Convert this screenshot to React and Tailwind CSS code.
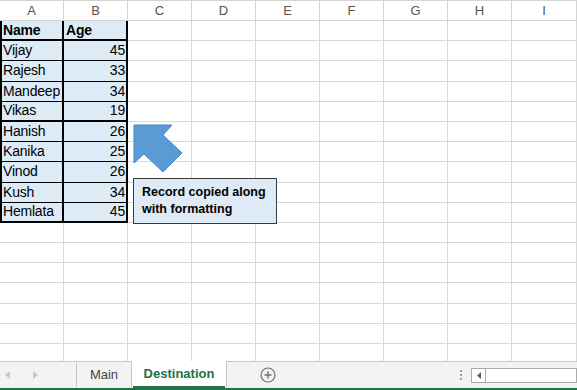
import React from 'react';

const cols = ['A', 'B', 'C', 'D', 'E', 'F', 'G', 'H', 'I'];

const records = [
  ['Name', 'Age'],
  ['Vijay', '45'],
  ['Rajesh', '33'],
  ['Mandeep', '34'],
  ['Vikas', '19'],
  ['Hanish', '26'],
  ['Kanika', '25'],
  ['Vinod', '26'],
  ['Kush', '34'],
  ['Hemlata', '45'],
];

const TOTAL_ROWS = 17;

// rows that get a thick bottom edge: header, Vikas, Hemlata
const thickBottom = [0, 4, 9];

function Cell({ row, col }) {
  const rec = records[row];
  if (rec && col < 2) {
    const thick = thickBottom.includes(row);
    const header = row === 0;
    const isAge = col === 1;
    return (
      <div
        className={
          'flex h-full items-center overflow-hidden whitespace-nowrap bg-[#ddebf7] text-[14px] tracking-[-0.2px] text-black ' +
          (thick ? 'border-b-2 border-b-black ' : 'border-b border-b-black ') +
          (col === 0 ? 'border-l-2 border-l-black border-r-2 border-r-black pl-[1px] ' : 'border-r-2 border-r-black pr-[1px] ') +
          (header ? 'font-bold justify-start ' : isAge ? 'justify-end ' : 'justify-start ') +
          (header && isAge ? 'pl-[2px] ' : '')
        }
      >
        {rec[col]}
      </div>
    );
  }
  return <div className="h-full border-b border-r border-[#d9d9d9] bg-white" />;
}

function SheetGrid() {
  return (
    <div className="relative flex-1 overflow-hidden bg-white">
      <div className="grid grid-cols-[64px_64px_64px_64px_64px_64px_64px_64px_65px] grid-rows-[21px_repeat(17,20.2px)]">
        {cols.map((c) => (
          <div
            key={c}
            className="flex items-center justify-center border-b border-r border-t border-[#d4d4d4] bg-white text-[13px] text-[#555]"
          >
            {c}
          </div>
        ))}
        {Array.from({ length: TOTAL_ROWS }).map((_, r) =>
          cols.map((c, ci) => <Cell key={c + r} row={r} col={ci} />)
        )}
      </div>

      {/* block arrow pointing back at the pasted range */}
      <svg className="absolute left-0 top-0" width="577" height="360">
        <polygon
          points="134,125 172,125 163,135 182,153 163,172 144,154 134,163"
          fill="#5b9bd5"
          stroke="#4a86bf"
          strokeWidth="1"
        />
      </svg>

      {/* callout */}
      <div className="absolute left-[133px] top-[178px] flex h-[46px] w-[144px] flex-col justify-center border border-[#3b3b3b] bg-[#deeaf6] pl-[8px] text-[12.5px] font-bold leading-[17px] text-black">
        <span>Record copied along</span>
        <span>with formatting</span>
      </div>
    </div>
  );
}

function TabBar() {
  return (
    <div className="flex h-[27px] shrink-0 items-stretch border-t border-[#c6c6c6] bg-[#f3f3f3] text-[13px]">
      <div className="flex w-[76px] items-center gap-[22px] pl-[5px]">
        <svg width="6" height="8" viewBox="0 0 6 8">
          <polygon points="5,0 5,8 0,4" fill="#c8c8c8" />
        </svg>
        <svg width="6" height="8" viewBox="0 0 6 8">
          <polygon points="0,0 0,8 5,4" fill="#c8c8c8" />
        </svg>
      </div>
      <div className="my-[1px] w-px bg-[#c6c6c6]" />
      <div className="flex w-[54px] items-center justify-center text-[#444]">Main</div>
      <div className="-mt-px flex w-[96px] flex-col border-x border-[#c6c6c6] bg-white">
        <div className="flex flex-1 items-center justify-center font-bold text-[#217346]">Destination</div>
        <div className="mx-[1px] h-[2px] bg-[#217346]" />
      </div>
      <div className="flex w-[82px] items-center justify-center">
        <svg width="16" height="16" viewBox="0 0 16 16">
          <circle cx="8" cy="8" r="7" fill="none" stroke="#6f6f6f" strokeWidth="1.2" />
          <path d="M8 4.5v7M4.5 8h7" stroke="#6f6f6f" strokeWidth="1.4" />
        </svg>
      </div>
      <div className="flex-1" />
      <div className="flex w-[16px] flex-col items-center justify-center gap-[2px]">
        <div className="h-[2px] w-[2px] bg-[#9a9a9a]" />
        <div className="h-[2px] w-[2px] bg-[#9a9a9a]" />
        <div className="h-[2px] w-[2px] bg-[#9a9a9a]" />
      </div>
      <div className="ml-[2px] flex items-center">
        <div className="flex h-[15px] w-[106px] border border-[#ababab] bg-white">
          <div className="flex w-[14px] items-center justify-center border-r border-[#ababab]">
            <svg width="4" height="7" viewBox="0 0 4 7">
              <polygon points="4,0 4,7 0,3.5" fill="#606060" />
            </svg>
          </div>
        </div>
      </div>
    </div>
  );
}

export default function App() {
  return (
    <div
      className="flex h-[390px] w-[577px] flex-col overflow-hidden bg-white"
      style={{ fontFamily: '"Liberation Sans", Arial, sans-serif' }}
    >
      <SheetGrid />
      <TabBar />
      <div className="h-[2px] shrink-0 bg-[#217346]" />
    </div>
  );
}
